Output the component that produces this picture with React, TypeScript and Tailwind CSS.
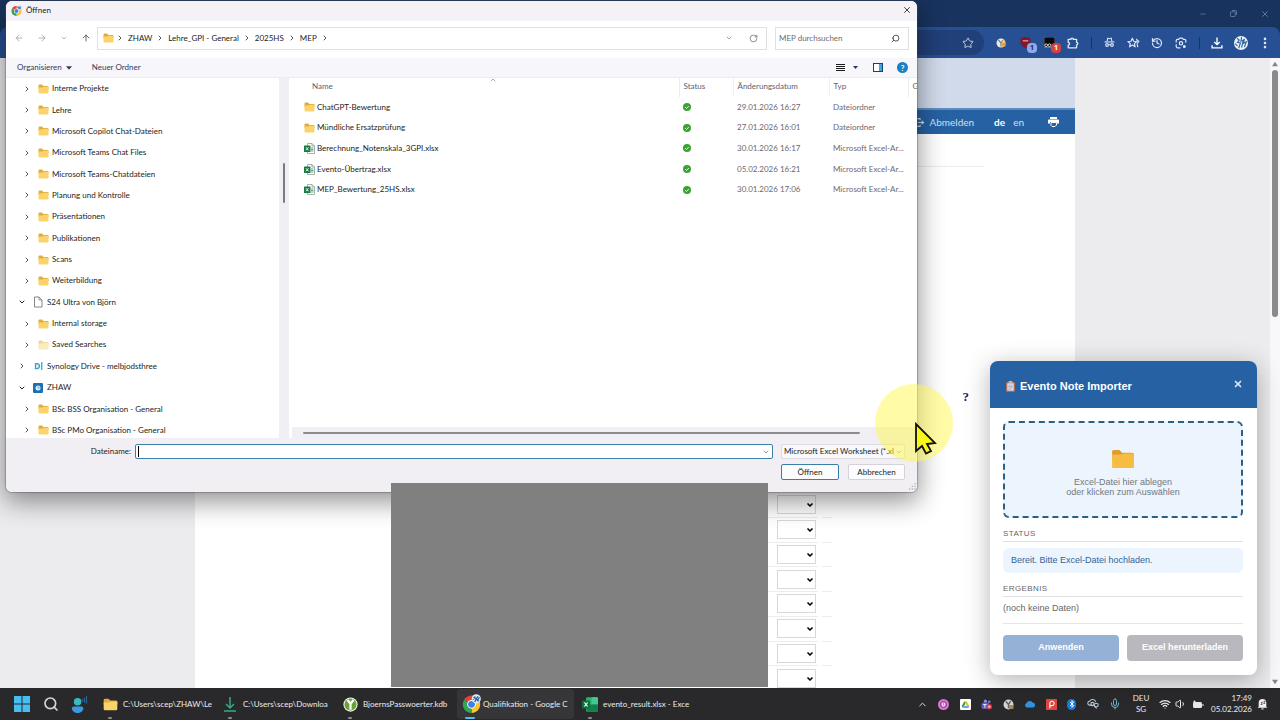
import React from "react";
import {
  ArrowLeft,
  ArrowRight,
  ArrowUp,
  Bluetooth,
  ChevronDown,
  ChevronRight,
  ChevronUp,
  EllipsisVertical,
  History,
  Mic,
  Minus,
  RotateCw,
  Search,
  Star,
  Volume1,
  Wifi,
  X,
} from "lucide-react";

type TreeIcon = "folder" | "pale" | "device" | "synology" | "zhaw";
type TreeNode = { label: string; level: 1 | 2; icon: TreeIcon; open?: boolean };

const tree: TreeNode[] = [
  { label: "Interne Projekte", level: 2, icon: "folder" },
  { label: "Lehre", level: 2, icon: "folder" },
  { label: "Microsoft Copilot Chat-Dateien", level: 2, icon: "folder" },
  { label: "Microsoft Teams Chat Files", level: 2, icon: "folder" },
  { label: "Microsoft Teams-Chatdateien", level: 2, icon: "folder" },
  { label: "Planung und Kontrolle", level: 2, icon: "folder" },
  { label: "Präsentationen", level: 2, icon: "folder" },
  { label: "Publikationen", level: 2, icon: "folder" },
  { label: "Scans", level: 2, icon: "folder" },
  { label: "Weiterbildung", level: 2, icon: "folder" },
  { label: "S24 Ultra von Björn", level: 1, icon: "device", open: true },
  { label: "Internal storage", level: 2, icon: "folder" },
  { label: "Saved Searches", level: 2, icon: "pale" },
  { label: "Synology Drive - melbjodsthree", level: 1, icon: "synology" },
  { label: "ZHAW", level: 1, icon: "zhaw", open: true },
  { label: "BSc BSS Organisation - General", level: 2, icon: "folder" },
  { label: "BSc PMo Organisation - General", level: 2, icon: "folder" },
];

const files = [
  { name: "ChatGPT-Bewertung", folder: true, date: "29.01.2026 16:27", type: "Dateiordner" },
  { name: "Mündliche Ersatzprüfung", folder: true, date: "27.01.2026 16:01", type: "Dateiordner" },
  { name: "Berechnung_Notenskala_3GPI.xlsx", folder: false, date: "30.01.2026 16:17", type: "Microsoft Excel-Ar..." },
  { name: "Evento-Übertrag.xlsx", folder: false, date: "05.02.2026 16:21", type: "Microsoft Excel-Ar..." },
  { name: "MEP_Bewertung_25HS.xlsx", folder: false, date: "30.01.2026 17:06", type: "Microsoft Excel-Ar..." },
];

const path = ["ZHAW", "Lehre_GPI - General", "2025HS", "MEP"];

function Folder({ className = "h-[10px] w-[11px]", pale = false }: { className?: string; pale?: boolean }) {
  return (
    <svg viewBox="0 0 22 20" preserveAspectRatio="none" className={`shrink-0 ${className}`} aria-hidden="true">
      <path d="M1 3a2 2 0 0 1 2-2h5l3 3h8a2 2 0 0 1 2 2v4H1z" fill={pale ? "#ecd89a" : "#e0ad3c"} />
      <path d="M1 7h8l2-1.500h10v11.500a2 2 0 0 1-2 2H3a2 2 0 0 1-2-2z" fill={pale ? "#f8ebbd" : "#fbd36b"} />
    </svg>
  );
}

function ExcelFile() {
  return (
    <svg viewBox="0 0 22 22" className="h-[11px] w-[11px] shrink-0" aria-hidden="true">
      <path d="M7 1h9l5 5v15H7z" fill="#fff" stroke="#8c9a93" strokeWidth="1.500" />
      <path d="M16 1v5h5" fill="none" stroke="#8c9a93" strokeWidth="1.500" />
      <path d="M14 10h5M14 13h5M14 16h5" stroke="#2e8f5c" strokeWidth="1.500" />
      <rect x="0" y="5" width="13" height="13" rx="1" fill="#187a45" />
      <path d="M4 8.500l5 6M9 8.500l-5 6" stroke="#fff" strokeWidth="1.800" />
    </svg>
  );
}

function Chrome({ className }: { className: string }) {
  return (
    <svg viewBox="0 0 24 24" className={className} aria-hidden="true">
      <path d="M12 13L2.500 7.500A11 11 0 0 1 21.500 7.500z" fill="#e14334" />
      <path d="M12 13L21.500 7.500A11 11 0 0 1 12 24z" fill="#f8c52c" />
      <path d="M12 13v11A11 11 0 0 1 2.500 7.500z" fill="#35a354" />
      <circle cx="12" cy="13" r="5.500" fill="#fff" />
      <circle cx="12" cy="13" r="4.300" fill="#3f7fe8" />
      <circle cx="18" cy="6" r="5.800" fill="#dcebf7" />
      <path d="M14 7l3-4M16 10l4-7M19 9l3-5M14.500 4l7 5" stroke="#2a5ba3" strokeWidth="1.500" />
    </svg>
  );
}

function NodeIcon({ kind }: { kind: TreeIcon }) {
  if (kind === "folder" || kind === "pale") return <Folder pale={kind === "pale"} />;
  if (kind === "device")
    return (
      <svg viewBox="0 0 20 24" className="h-3 w-[10px] shrink-0" aria-hidden="true">
        <path d="M3 2h9l6 6v14H3z" fill="#fff" stroke="#77777d" strokeWidth="1.800" />
        <path d="M12 2v6h6" fill="none" stroke="#77777d" strokeWidth="1.500" />
      </svg>
    );
  if (kind === "synology")
    return (
      <svg viewBox="0 0 20 20" className="h-[10px] w-[10px] shrink-0" aria-hidden="true">
        <path d="M5 5h3a4.500 4.500 0 0 1 0 10H5z" fill="#d6effa" stroke="#3d9bd8" strokeWidth="2.500" />
        <path d="M17.500 2v16" stroke="#22a9c9" strokeWidth="2.500" />
      </svg>
    );
  return (
    <svg viewBox="0 0 20 20" className="h-[10px] w-[10px] shrink-0" aria-hidden="true">
      <rect width="20" height="20" rx="2" fill="#1f6fb5" />
      <circle cx="10" cy="10" r="5" fill="#d9edfa" />
      <path d="M10 5v5h5" stroke="#5aa5dc" strokeWidth="1.500" fill="none" />
    </svg>
  );
}

function BrowserChrome() {
  return (
    <header className="shrink-0 bg-[#19335f] text-[#dfe8f8]">
      <div className="flex h-[27px] items-center justify-end text-[#6f82a6]">
        <button aria-label="Minimieren" className="grid w-[31px] place-items-center"><Minus className="size-2" /></button>
        <button aria-label="Wiederherstellen" className="grid w-[31px] place-items-center">
          <svg viewBox="0 0 16 16" className="size-[7px]" fill="none" stroke="currentColor" strokeWidth="2">
            <rect x="1" y="4" width="11" height="11" rx="2" />
            <path d="M5 1h7a3 3 0 0 1 3 3v7" />
          </svg>
        </button>
        <button aria-label="Fenster schliessen" className="grid w-[31px] place-items-center"><X className="size-[10px]" /></button>
      </div>
      <div className="flex h-[31px] items-center rounded-t-lg bg-[#264f94] pr-[3px] pl-20">
        <div className="mr-[5px] flex h-[25px] flex-1 items-center justify-end rounded-full bg-[#213f78] pr-[10px]">
          <button aria-label="Lesezeichen"><Star className="size-3 text-[#c3cfe6]" strokeWidth={2} /></button>
        </div>
        <button aria-label="Passwortmanager" className="grid w-6 place-items-center">
          <svg viewBox="0 0 20 20" className="size-[10px]">
            <circle cx="10" cy="10" r="9" fill="#e9ece8" />
            <path d="M5 4l5 6 4-6M10 10v7" stroke="#7b7e80" strokeWidth="2.500" fill="none" />
            <rect x="10" y="9" width="9" height="8" rx="1" fill="#e7a23c" />
            <path d="M12 9V7a2.500 2.500 0 0 1 5 0v2" stroke="#e7a23c" strokeWidth="1.500" fill="none" />
          </svg>
        </button>
        <button aria-label="Werbeblocker" className="relative grid h-5 w-6 place-items-center">
          <svg viewBox="0 0 20 20" className="size-[11px]"><path d="M1 2l9-2 9 2v8c0 5-5 8-9 10-4-2-9-5-9-10z" fill="#85152b" /><path d="M5 7h10" stroke="#e6bcc4" strokeWidth="2" /></svg>
          <span className="absolute right-0 bottom-0 grid h-[10px] w-[10px] place-items-center rounded-sm bg-[#8fa8ee] text-[7px] font-bold text-[#152b60]">1</span>
        </button>
        <button aria-label="Skriptverwaltung" className="relative grid h-5 w-6 place-items-center">
          <svg viewBox="0 0 20 20" className="size-[11px]"><rect width="20" height="19" rx="2" fill="#08090c" stroke="#a9b5cc" strokeWidth="1" /><circle cx="4" cy="15" r="2.500" stroke="#fff" strokeWidth="1.500" fill="none" /><circle cx="10" cy="15" r="2.500" stroke="#fff" strokeWidth="1.500" fill="none" /></svg>
          <span className="absolute right-0 bottom-0 grid h-[10px] w-[10px] place-items-center rounded-sm bg-[#d6433f] text-[7px] font-bold text-white">1</span>
        </button>
        <button aria-label="Erweiterungen" className="grid w-6 place-items-center">
          <svg viewBox="0 0 20 20" className="size-3" fill="none" stroke="currentColor" strokeWidth="2.200" strokeLinejoin="round">
            <path d="M2 4h4.500a2 2 0 0 1 4 0H16v5a2 2 0 0 1 0 4v5H2v-4.500a2.300 2.300 0 0 0 0-4.600z" />
          </svg>
        </button>
        <span className="flex w-3 justify-center"><span className="h-3 w-px bg-[#173466]" /></span>
        <button aria-label="Inkognito" className="grid w-6 place-items-center">
          <svg viewBox="0 0 20 20" className="size-[11px]" fill="none" stroke="currentColor" strokeWidth="2">
            <path d="M5.500 8l1.500-6 3 1 3-1 1.500 6" />
            <path d="M1 9h18" />
            <circle cx="5.500" cy="14.500" r="2.500" />
            <circle cx="14.500" cy="14.500" r="2.500" />
            <path d="M8 14h4" />
          </svg>
        </button>
        <button aria-label="Favoriten" className="grid w-6 place-items-center">
          <svg viewBox="0 0 22 20" className="h-3 w-[13px]" fill="none" stroke="currentColor" strokeWidth="2" strokeLinejoin="round">
            <path d="M9 2l2.200 5 5.300.5-4 3.500 1.200 5.500L9 13.500l-4.700 3 1.200-5.500-4-3.500L6.800 7z" />
            <path d="M16 3l1.500 3 3 1M17 12l1.500 5M20.500 7L17 11" />
          </svg>
        </button>
        <button aria-label="Verlauf" className="grid w-6 place-items-center"><History className="size-3" strokeWidth={2.5} /></button>
        <button aria-label="Bildsuche" className="grid w-6 place-items-center">
          <svg viewBox="0 0 20 20" className="size-3" fill="none" stroke="currentColor" strokeWidth="2">
            <path d="M2 9V6a2 2 0 0 1 2-2h2l2-2h4l2 2h2a2 2 0 0 1 2 2v3M2 12v4a2 2 0 0 0 2 2h5" />
            <circle cx="10" cy="10.500" r="2.800" />
            <circle cx="15.500" cy="16" r="1.500" fill="currentColor" />
          </svg>
        </button>
        <span className="flex w-3 justify-center"><span className="h-3 w-px bg-[#173466]" /></span>
        <button aria-label="Downloads" className="grid w-6 place-items-center">
          <svg viewBox="0 0 22 22" className="size-[12px]" fill="none" stroke="#fff" strokeWidth="2.500"><path d="M11 1v13M6 9l5 5 5-5M2 15v5h18v-5" /></svg>
        </button>
        <button aria-label="Profil" className="grid w-6 place-items-center">
          <svg viewBox="0 0 24 24" className="size-[14px]">
            <circle cx="12" cy="12" r="12" fill="#e8f1fa" />
            <path d="M5 4l4 3-3 4 5 1-3 9M13 2l-1 7 4-2-3 13M18 5l-2 8 5-3-3 9M2 13l4 4" stroke="#34689f" strokeWidth="2" fill="none" />
          </svg>
        </button>
        <button aria-label="Menü" className="grid w-6 place-items-center"><EllipsisVertical className="size-[14px]" strokeWidth={2.5} /></button>
      </div>
    </header>
  );
}

function WebPage() {
  return (
    <main className="flex min-h-0 flex-1 bg-[#ecebed]">
      <div className="min-w-0 flex-1">
        <div className="mx-auto flex h-full w-[880px] max-w-full flex-col overflow-hidden bg-white">
          <div className="h-[50px] shrink-0 bg-[#d0daea]" />
          <div className="h-[2px] shrink-0 bg-[#5f8bc0]" />
          <nav className="flex h-6 shrink-0 items-center justify-end bg-[#2661a3] pr-4 font-['Lato','Noto_Sans',sans-serif] text-[10px] text-[#cfe0f3]">
            <a href="#logout" className="flex items-center gap-1">
              <svg viewBox="0 0 20 16" className="h-[9px] w-[11px]" fill="none" stroke="currentColor" strokeWidth="2">
                <path d="M11 4V1H2v14h9v-3M7 8h10M14 5l3.500 3L14 11" />
              </svg>
              Abmelden
            </a>
            <a href="#de" className="ml-5 font-bold text-white">de</a>
            <a href="#en" className="ml-2">en</a>
            <button aria-label="Drucken" className="ml-6">
              <svg viewBox="0 0 22 20" className="h-[10px] w-[11px]" fill="#fff">
                <path d="M4 0h14v4H4zM2 5h18a2 2 0 0 1 2 2v6h-4v-3H4v3H0V7a2 2 0 0 1 2-2z" />
                <path d="M6 11h11v5l-3 3H8l-2-2z" fill="none" stroke="#fff" strokeWidth="2" />
              </svg>
            </button>
          </nav>
          <hr className="mt-8 w-[789px] shrink-0 border-[#ececef]" />
          <div className="mt-[224px] flex h-3 shrink-0 justify-end pr-[106px]">
            <button aria-label="Hilfe" className="font-['Liberation_Serif',serif] text-[13px] leading-3 font-black text-[#1c1681]">?</button>
          </div>
          <div className="mt-[90px] flex h-[198px] shrink-0 flex-col pl-[573px]">
            {Array.from({ length: 8 }, (_, i) => (
              <div key={i} className="flex flex-1 gap-1">
                <div className="flex w-[50px] items-center border-b border-[#ececee] pl-[9px]">
                  <div className="relative h-[19px] w-[39px]">
                    <select aria-label={`Note ${i + 1}`} className="h-full w-full appearance-none border border-[#d8d8da] bg-transparent">
                      <option />
                    </select>
                    <ChevronDown className="pointer-events-none absolute top-[6px] right-[2px] size-2 text-black" strokeWidth={5} />
                  </div>
                </div>
                <div className="w-[10px] border-b border-[#ececee]" />
              </div>
            ))}
          </div>
        </div>
      </div>
      <div className="flex w-[10px] flex-col items-center bg-[#f8f7fa] py-[3px] text-[#858589]">
        <svg viewBox="0 0 8 8" className="h-[6px] w-[6px]" fill="currentColor"><path d="M4 1l4 6H0z" /></svg>
        <div className="mt-[3px] h-[247px] w-[6px] rounded-full bg-[#8a8a8e]" />
        <svg viewBox="0 0 8 8" className="mt-auto h-[6px] w-[6px]" fill="currentColor"><path d="M4 7l4-6H0z" /></svg>
      </div>
    </main>
  );
}

function OpenDialog() {
  return (
    <section
      role="dialog"
      aria-label="Öffnen"
      className="absolute top-px left-[6px] flex w-[911px] flex-col overflow-hidden rounded-md bg-white font-['Lato','Noto_Sans',sans-serif] text-[8px] leading-[11px] text-[#1d1d20] shadow-[0_8px_26px_2px_rgba(0,0,0,0.42),0_0_1px_1px_rgba(90,90,100,0.35)]"
    >
      <div className="flex h-5 items-center bg-[#f4f2f6] pr-[5px] pb-[2px] pl-[5px]">
        <Chrome className="size-[11px]" />
        <h1 className="ml-1">Öffnen</h1>
        <button aria-label="Schliessen" className="ml-auto"><X className="size-[10px] text-[#222]" strokeWidth={2} /></button>
      </div>

      <div className="flex h-[37px] items-center pr-2 pb-[3px] pl-2">
        <div className="flex w-[83px] shrink-0 items-center gap-[13px]">
          <button aria-label="Zurück"><ArrowLeft className="block size-[10px] text-[#a5a3a9]" /></button>
          <button aria-label="Vorwärts"><ArrowRight className="block size-[10px] text-[#a5a3a9]" /></button>
          <button aria-label="Letzte Orte"><ChevronDown className="block size-2 text-[#95939a]" /></button>
          <button aria-label="Nach oben"><ArrowUp className="block size-[10px] text-[#4c4c52]" /></button>
        </div>
        <div className="flex h-[23px] flex-1 items-center border border-[#e2e0e6] pr-2 pl-[5px]">
          <Folder className="h-[10px] w-[11px]" />
          <ChevronRight className="ml-[2px] size-2 text-[#333]" strokeWidth={2.5} />
          {path.map((p) => (
            <React.Fragment key={p}>
              <button className="ml-1 whitespace-nowrap">{p}</button>
              <ChevronRight className="ml-1 size-2 text-[#333]" strokeWidth={2.5} />
            </React.Fragment>
          ))}
          <button aria-label="Verlauf anzeigen" className="ml-auto"><ChevronDown className="size-2 text-[#77757b]" /></button>
          <button aria-label="Aktualisieren" className="ml-4"><RotateCw className="size-[9px] text-[#6b696f]" /></button>
        </div>
        <div className="ml-2 flex h-[23px] w-[134px] items-center border border-[#e2e0e6] pr-2 pl-[3px]">
          <input aria-label="MEP durchsuchen" placeholder="MEP durchsuchen" className="min-w-0 flex-1 outline-none placeholder:text-[#6d6b72]" />
          <Search className="size-[9px] -scale-x-100 text-[#4c4c52]" strokeWidth={2.5} />
        </div>
      </div>

      <div className="flex h-5 items-center border-b border-[#ececf0] bg-[#f7f6fb] pr-[9px] pl-[11px] text-[#343a58]">
        <button className="flex items-center gap-1">
          Organisieren
          <svg viewBox="0 0 10 6" className="h-[4px] w-[6px]" fill="currentColor"><path d="M0 0h10L5 6z" /></svg>
        </button>
        <button className="ml-5">Neuer Ordner</button>
        <div className="ml-auto flex items-center">
          <button aria-label="Ansicht" className="flex items-center gap-2 text-[#1d1d20]">
            <svg viewBox="0 0 9 7" className="h-[7px] w-[9px]" fill="currentColor" shapeRendering="crispEdges"><path d="M0 0h9v1H0zM0 2h9v1H0zM0 4h9v1H0zM0 6h9v1H0z" /></svg>
            <svg viewBox="0 0 10 6" className="h-[3px] w-[5px]" fill="#223a66"><path d="M0 0h10L5 6z" /></svg>
          </button>
          <button aria-label="Vorschaufenster" className="ml-[15px]">
            <svg viewBox="0 0 20 18" className="block h-[9px] w-[10px]"><rect x="1" y="1" width="18" height="16" fill="#fff" stroke="#1b4168" strokeWidth="2" /><path d="M12 2h6v14h-6z" fill="#3fa9dc" /></svg>
          </button>
          <button aria-label="Hilfe" className="ml-[14px] grid size-[11px] place-items-center rounded-full bg-[#1a7fc4] text-[8px] leading-none font-bold text-white">?</button>
        </div>
      </div>

      <div className="flex h-[360px]">
        <nav className="w-[273px] shrink-0 overflow-hidden">
          <ul className="flex h-[363px] flex-col">
            {tree.map((n) => (
              <li key={n.label} className={`flex flex-1 items-center ${n.level === 1 ? "pl-3" : "pl-[17px]"}`}>
                {n.open ? (
                  <ChevronDown className="size-2 shrink-0 text-[#222]" strokeWidth={3} />
                ) : (
                  <ChevronRight className="size-2 shrink-0 text-[#55535a]" strokeWidth={3} />
                )}
                <span className={`ml-[7px] flex items-center ${n.level === 1 ? "gap-1" : "gap-[3px]"}`}>
                  <NodeIcon kind={n.icon} />
                  <span className="whitespace-nowrap">{n.label}</span>
                </span>
              </li>
            ))}
          </ul>
        </nav>
        <div className="flex w-[10px] shrink-0 justify-center bg-[#f1eff3] pt-[85px]">
          <div className="h-10 w-[2px] rounded-full bg-[#7d7a80]" />
        </div>
        <div className="relative flex min-w-0 flex-1 flex-col justify-between">
          <ChevronUp className="absolute -top-[2px] left-[200px] size-2 text-[#55535a]" strokeWidth={1.5} />
          <table className="h-[122px] w-full table-fixed border-collapse text-left">
            <thead className="text-[#5b6078]">
              <tr className="h-[19px]">
                <th className="border-r border-[#ececf0] pb-[2px] pl-[23px] font-normal">Name</th>
                <th className="w-[54px] border-r border-[#f1f1f4] pb-[2px] pl-1 font-normal">Status</th>
                <th className="w-24 border-r border-[#f1f1f4] pb-[2px] pl-1 font-normal">Änderungsdatum</th>
                <th className="w-[79px] border-r border-[#ececf0] pb-[2px] pl-1 font-normal">Typ</th>
                <th className="w-[9px] overflow-hidden pb-[2px] pl-1 font-normal">G</th>
              </tr>
            </thead>
            <tbody className="text-[#6b6970]">
              {files.map((f) => (
                <tr key={f.name}>
                  <td className="pl-[15px] text-[#1d1d20]">
                    <span className="flex items-center gap-[2px]">
                      {f.folder ? <Folder /> : <ExcelFile />}
                      {f.name}
                    </span>
                  </td>
                  <td className="pl-[4px]">
                    <svg viewBox="0 0 16 16" className="block size-2" role="img" aria-label="Verfügbar">
                      <circle cx="8" cy="8" r="8" fill="#3da233" />
                      <path d="M4.500 8.500l2.500 2.500 4.500-5" stroke="#fff" strokeWidth="1.800" fill="none" />
                    </svg>
                  </td>
                  <td className="pl-1">{f.date}</td>
                  <td className="pl-1 whitespace-nowrap">{f.type}</td>
                  <td />
                </tr>
              ))}
            </tbody>
          </table>
          <div className="ml-[3px] flex h-[11px] items-center bg-[#f1eff3] pr-[57px] pl-[11px]">
            <div className="h-[2px] flex-1 rounded-full bg-[#8d8a90]" />
          </div>
        </div>
      </div>

      <div className="flex h-[54px] flex-col bg-[#f1eff3] pt-[6px] pr-3">
        <div className="flex h-[15px] items-center">
          <label htmlFor="filename" className="w-[125px] text-right">Dateiname:</label>
          <div className="ml-1 flex h-[15px] flex-1 items-center rounded-xs border border-[#3a7fa8] bg-white pr-[2px] pl-[2px]">
            <span className="h-[11px] w-px bg-black" />
            <input id="filename" className="h-[11px] min-w-0 flex-1 outline-none" />
            <ChevronDown className="size-2 text-[#66646a]" />
          </div>
          <div className="relative ml-2 h-[15px] w-[124px]">
            <select aria-label="Dateityp" className="h-full w-full appearance-none rounded-xs border border-[#dddbe0] bg-[#f8f7fa] pr-[10px] pl-[2px]">
              <option>Microsoft Excel Worksheet (*.xls</option>
            </select>
            <ChevronDown className="pointer-events-none absolute top-1 right-[2px] size-2 text-[#8d8a90]" />
          </div>
        </div>
        <div className="mt-[5px] flex justify-end gap-[9px]">
          <button className="h-4 w-[58px] rounded-xs border border-[#3a7fa8] bg-[#fcfbfd]">Öffnen</button>
          <button className="h-4 w-[57px] rounded-xs border border-[#d5d3d8] bg-[#fcfbfd]">Abbrechen</button>
        </div>
        <svg viewBox="0 0 12 12" className="-mr-3 mt-auto mb-px h-2 w-2 self-end text-[#b5b3b9]" fill="currentColor" aria-hidden="true">
          <path d="M8 0h2v2H8zM8 4h2v2H8zM8 8h2v2H8zM4 4h2v2H4zM4 8h2v2H4zM0 8h2v2H0z" />
        </svg>
      </div>
    </section>
  );
}

function Importer() {
  return (
    <section className="absolute right-[23px] bottom-[45px] w-[267px] overflow-hidden rounded-lg bg-white font-['Liberation_Sans',Arial,sans-serif] text-[#666] shadow-[0_5px_24px_rgba(0,0,0,0.3)]">
      <header className="flex h-[47px] items-center bg-[#2661a3] pt-1 pr-[14px] pl-[15px] text-white">
        <svg viewBox="0 0 22 24" className="h-[11px] w-[11px]" aria-hidden="true">
          <rect x="1" y="2" width="20" height="22" rx="2" fill="#a86c58" />
          <rect x="4" y="5" width="14" height="16" fill="#e9e4ee" />
          <rect x="7" y="0" width="8" height="5" rx="1" fill="#b9b9c4" />
          <path d="M6 9h10M6 12h10M6 15h10M6 18h7" stroke="#8d8ba6" strokeWidth="1.200" />
        </svg>
        <h2 className="ml-1 text-[11px] font-bold">Evento Note Importer</h2>
        <button aria-label="Importer schliessen" className="mb-[5px] ml-auto"><X className="size-[10px] text-[#dce9f7]" strokeWidth={4} /></button>
      </header>
      <div className="pt-[13px] pr-[14px] pb-[14px] pl-[13px]">
        <button className="flex h-[97px] w-full flex-col items-center rounded-md border-2 border-dashed border-[#2c5f86] bg-[#ecf4fd] pt-[26px] text-[9px] leading-[10px] text-[#737880]">
          <svg viewBox="0 0 24 22" className="mb-[8px] h-5 w-[22px]" aria-hidden="true">
            <path d="M0 3a2 2 0 0 1 2-2h6l3 3h11a2 2 0 0 1 2 2v5H0z" fill="#dd9c2c" />
            <path d="M0 6h10l2-1h12v15a1 1 0 0 1-1 1H1a1 1 0 0 1-1-1z" fill="#f7bd43" />
          </svg>
          <span>Excel-Datei hier ablegen</span>
          <span>oder klicken zum Auswählen</span>
        </button>
        <h3 className="mt-[10px] border-b border-[#e0e0e4] pb-[2px] text-[8px] leading-[11px] tracking-wider">STATUS</h3>
        <p className="mt-[6px] rounded-md bg-[#ecf4fd] px-2 py-[6px] text-[9px] leading-[13px] text-[#33649b]">Bereit. Bitte Excel-Datei hochladen.</p>
        <h3 className="mt-[10px] border-b border-[#e0e0e4] pb-[2px] text-[8px] leading-[11px] tracking-wider">ERGEBNIS</h3>
        <p className="mt-[4px] text-[9px] leading-[14px]">(noch keine Daten)</p>
        <div className="mt-[8px] flex gap-2 border-t border-[#e6e6ea] pt-[11px]">
          <button className="h-[26px] flex-1 rounded-sm bg-[#95b1d5] text-[9px] font-bold text-white">Anwenden</button>
          <button className="h-[26px] flex-1 rounded-sm bg-[#b9b8bf] text-[9px] font-bold whitespace-nowrap text-white">Excel herunterladen</button>
        </div>
      </div>
    </section>
  );
}

function Task({ icon, label, active = false }: { icon: React.ReactNode; label: string; active?: boolean }) {
  return (
    <button className="h-[30px] w-[120px]">
      <span className={`flex h-full w-[117px] items-center rounded-sm pl-[5px] ${active ? "bg-[#363639]" : ""}`}>
        <span className="relative grid h-full w-4 shrink-0 place-items-center">
          {icon}
          <span className={`absolute bottom-0 h-[2px] rounded-full ${active ? "w-[10px] bg-[#5cb8ea]" : "w-1 bg-[#8d8d90]"}`} />
        </span>
        <span className="ml-[5px] text-left whitespace-nowrap">{label}</span>
      </span>
    </button>
  );
}

function Taskbar() {
  return (
    <footer className="flex h-8 shrink-0 items-center bg-[#29292b] pr-3 pl-[7px] font-['Lato','Noto_Sans',sans-serif] text-[8px] leading-[11px] text-[#ececee]">
      <button aria-label="Start" className="grid w-[29px] place-items-center">
        <svg viewBox="0 0 16 16" className="size-4" fill="#47bdf2"><path d="M0 0h7.500v7.500H0zM8.500 0H16v7.500H8.500zM0 8.500h7.500V16H0zM8.500 8.500H16V16H8.500z" /></svg>
      </button>
      <button aria-label="Suche" className="grid w-[29px] place-items-center"><Search className="size-4 text-[#d5d5d8]" strokeWidth={2.5} /></button>
      <button aria-label="Kontakte" className="mr-[3px] grid w-[29px] place-items-center">
        <svg viewBox="0 0 18 18" className="size-[17px]">
          <circle cx="7" cy="6" r="4" fill="#39b9c0" />
          <path d="M1 13a2 2 0 0 1 2-2h8a2 2 0 0 1 2 2c0 3-3 5-6 5s-6-2-6-5z" fill="#3b9ae0" />
          <path d="M12.500 3v3M14.500 1.500v6M16.500 0v8" stroke="#2f6fa8" strokeWidth="1" />
        </svg>
      </button>
      <Task icon={<Folder className="h-[13px] w-[15px]" />} label="C:\Users\scep\ZHAW\Le" />
      <Task
        icon={<svg viewBox="0 0 14 16" className="h-4 w-[14px]" fill="none" stroke="#35a98a" strokeWidth="1.500"><path d="M7 1v11M3 8l4 4 4-4M1 15h12" /></svg>}
        label="C:\Users\scep\Downloa"
      />
      <Task
        icon={
          <svg viewBox="0 0 20 20" className="size-[15px]">
            <circle cx="10" cy="10" r="9.500" fill="#f0f5e6" />
            <circle cx="10" cy="10" r="8" fill="#6aa03a" />
            <path d="M6 4l4 5 4-5M10 8v9" stroke="#fff" strokeWidth="3" fill="none" />
          </svg>
        }
        label="BjoernsPasswoerter.kdb"
      />
      <Task icon={<Chrome className="-mt-px size-[19px]" />} label="Qualifikation - Google C" active />
      <Task
        icon={
          <svg viewBox="0 0 20 18" className="h-[15px] w-4">
            <rect x="5" y="0" width="15" height="18" rx="1.500" fill="#2fb06f" />
            <path d="M12 0h6.500A1.500 1.500 0 0 1 20 1.500V9h-8z" fill="#44c98a" />
            <path d="M5 9h15v9H6z" fill="#14814c" />
            <rect x="0" y="4" width="10" height="10" rx="1" fill="#0f7040" />
            <path d="M3 6.500l4 5M7 6.500l-4 5" stroke="#fff" strokeWidth="1.500" />
          </svg>
        }
        label="evento_result.xlsx - Exce"
      />

      <div className="ml-auto flex items-center">
        <div className="flex w-[204px] items-center justify-between">
          <ChevronUp className="size-[11px]" />
          <svg viewBox="0 0 20 20" className="size-[11px]"><circle cx="10" cy="10" r="10" fill="#d678cf" /><circle cx="10" cy="10" r="5.500" fill="none" stroke="#8b2c8c" strokeWidth="1.500" /><path d="M8 7v4a2 2 0 0 0 4 0V7" stroke="#fff" strokeWidth="1.500" fill="none" /></svg>
          <svg viewBox="0 0 20 20" className="size-[11px]"><rect width="20" height="20" rx="2" fill="#fff" /><path d="M8 4L3 13l2.500 3 5-9z" fill="#2ba24c" /><path d="M8 4h4l5 9h-4z" fill="#fbbc05" /><path d="M7 13h10l-2 3H5.500z" fill="#4285f4" /></svg>
          <svg viewBox="0 0 20 20" className="size-[11px]"><circle cx="8" cy="4" r="3" fill="#8a8fe8" /><circle cx="15" cy="5" r="2.500" fill="#7378d6" /><rect x="1" y="7" width="14" height="11" rx="3" fill="#5b5fc7" /><path d="M4 10h6M7 10v6" stroke="#fff" strokeWidth="1.500" /><circle cx="15" cy="14" r="5" fill="#d93a4a" /><path d="M12.500 14h5M15 11.500v5" stroke="#fff" strokeWidth="1.200" /></svg>
          <svg viewBox="0 0 20 20" className="size-[11px]"><circle cx="10" cy="10" r="9" fill="#d3d5d2" /><path d="M5 4l5 6 4-6M10 10v7" stroke="#606266" strokeWidth="2.500" fill="none" /><rect x="11" y="11" width="8" height="7" fill="#a58a5c" /></svg>
          <svg viewBox="0 0 22 16" className="h-2 w-[11px]"><path d="M5 15a5 5 0 0 1 0-9 7 7 0 0 1 12-1 5 5 0 0 1 0 10z" fill="#2f94e6" /></svg>
          <svg viewBox="0 0 20 20" className="size-[11px]"><rect width="20" height="20" rx="1" fill="#e04640" /><path d="M7 17V7a4 4 0 1 1 4 5H8" stroke="#fff" strokeWidth="2" fill="none" /></svg>
          <span className="grid h-[11px] w-[9px] place-items-center rounded-full bg-[#1b78dc]"><Bluetooth className="size-[8px] text-white" strokeWidth={3} /></span>
          <svg viewBox="0 0 22 18" className="h-[10px] w-3" fill="none" stroke="#b9ccd6" strokeWidth="2"><path d="M5 11a3.500 3.500 0 0 1 0-7 6 6 0 0 1 11 1M5 11h5" /><circle cx="10" cy="9" r="3" /><circle cx="17" cy="11" r="3.500" /><path d="M13 13l5 4" /></svg>
          <Mic className="size-3 text-[#6fb4cd]" />
        </div>
        <div className="ml-[10px] w-5 text-center">DEU<br />SG</div>
        <Wifi className="ml-[8px] size-3" strokeWidth={2.5} />
        <Volume1 className="ml-[4px] size-3" />
        <svg viewBox="0 0 24 18" className="ml-[5px] h-[9px] w-3"><rect x="2" y="4" width="18" height="12" rx="3" fill="#e8e8ea" /><path d="M22 8v4" stroke="#e8e8ea" strokeWidth="2" /><path d="M5 1v7M2 4h6" stroke="#e8e8ea" strokeWidth="2" /></svg>
        <time className="ml-[4px] w-11 text-right">17:49<br />05.02.2026</time>
        <svg viewBox="0 0 20 22" className="ml-[5px] h-3 w-[11px]"><path d="M3 16V9a7 7 0 0 1 14 0v7l2 2H1z" fill="#f1f1f3" /><path d="M8 20h4" stroke="#f1f1f3" strokeWidth="2" /><path d="M7 8h3l-3 4h3M12 6h3l-3 4h3" stroke="#29292b" strokeWidth="1.200" fill="none" /></svg>
      </div>
    </footer>
  );
}

export default function App() {
  return (
    <div className="relative flex h-screen flex-col overflow-hidden">
      <BrowserChrome />
      <WebPage />
      <OpenDialog />
      <div className="absolute top-[483px] bottom-[33px] left-[391px] w-[377px] bg-[#808080]" />
      <Importer />
      <Taskbar />
      <div className="pointer-events-none absolute top-[384px] left-[875px] size-[78px] rounded-full bg-[#fff84d]/50" />
      <svg viewBox="0 0 24 34" className="pointer-events-none absolute top-[422px] left-[914px] h-[34px] w-6" aria-hidden="true">
        <path d="M2 2v27l6-5 4 7.500 5-2.500-4-7 8-1z" fill="#f7f71c" stroke="#111" strokeWidth="1.800" strokeLinejoin="miter" />
      </svg>
    </div>
  );
}
